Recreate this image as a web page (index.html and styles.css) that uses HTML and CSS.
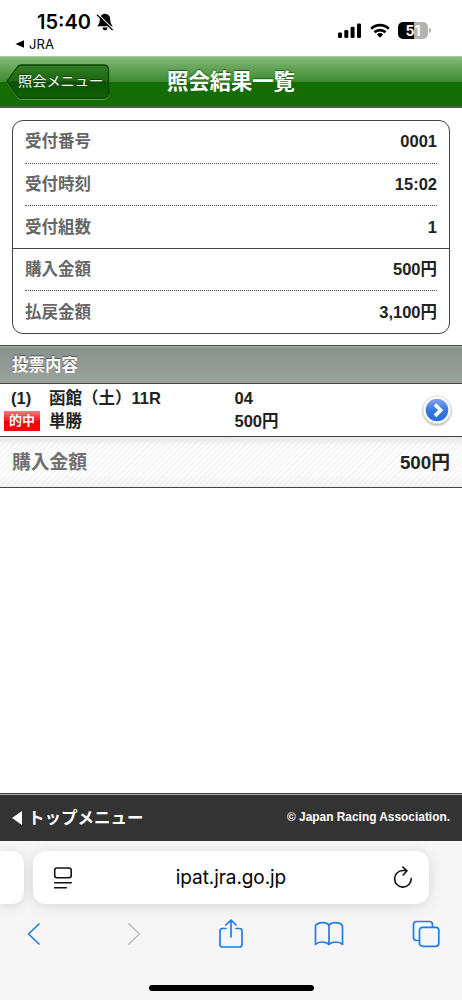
FILE: index.html
```html
<!DOCTYPE html>
<html lang="ja">
<head>
<meta charset="utf-8">
<title>照会結果一覧</title>
<link rel="stylesheet" href="styles.css">
</head>
<body>
<div class="status">
  <div class="clock-row">
    <span class="clock">15:40</span>
    <svg class="bell" width="18" height="18" viewBox="0 0 18 18"><path d="M9 .8C5 1.200 3.800 3.500 3.800 6.500C3.800 10 2.800 10.800 1.300 13.300H16.700C15.200 10.800 14.200 10 14.200 6.500C14.200 3.500 13 1.200 9 .8ZM6.300 14.500H11.700Q11 17.200 9 17.200T6.300 14.500Z"/><path d="M2.200 1.400L17.200 16.200" stroke="#fff" stroke-width="1.300"/><path d="M1 1.800L16.600 17" stroke="#111" stroke-width="1.400"/></svg>
  </div>
  <div class="return"><svg width="10" height="8" viewBox="0 0 10 8"><path d="M.5 4L9 .3V7.700Z"/></svg><span>JRA</span></div>
  <div class="indicators">
    <svg width="24" height="16" viewBox="0 0 24 16"><rect x="0" y="9.500" width="4" height="5.500" rx="1.200"/><rect x="6.300" y="7" width="4" height="8" rx="1.200"/><rect x="12.600" y="3.800" width="4" height="11.200" rx="1.200"/><rect x="19" y="0.500" width="4" height="14.500" rx="1.200"/></svg>
    <svg width="20" height="16" viewBox="0 0 20 16"><g fill="none" stroke="#000" stroke-width="2.700"><path d="M1.200 5.800A12.600 12.600 0 0 1 18.800 5.800"/><path d="M4.500 9.300A8 8 0 0 1 15.500 9.300"/></g><path d="M6.900 11.500A4.500 4.500 0 0 1 13.100 11.500L10 14.800Z"/></svg>
    <div class="battery"><span class="level">51</span><i class="nub"></i></div>
  </div>
</div>
<header class="header">
  <a class="back">
    <svg class="back-shape" width="104" height="38" viewBox="0 0 104 38"><defs><linearGradient id="bg" x1="0" y1="0" x2="0" y2="1"><stop offset="0" stop-color="#347d26"/><stop offset=".48" stop-color="#1c6710"/><stop offset=".52" stop-color="#0d5204"/><stop offset="1" stop-color="#116007"/></linearGradient></defs><path d="M15 2H97Q102.500 2 102.500 7.500V30Q102.500 35.500 97 35.500H15Q12.500 35.500 10.500 32L1 18.500L10.500 5Q12.500 2 15 2Z" fill="none" stroke="#80ad76" stroke-opacity=".7"/><path d="M15 1H97.500Q102.500 1 102.500 6V29Q102.500 34 97.500 34H15Q12.500 34 10.500 31L1 17.500L10.500 4Q12.500 1 15 1Z" fill="url(#bg)" stroke="#0b4605" stroke-width="1.300"/></svg>
    <span class="back-label">照会メニュー</span>
  </a>
  <h1 class="title">照会結果一覧</h1>
</header>
<main class="main">
  <dl class="card">
    <div class="row"><dt>受付番号</dt><dd>0001</dd></div>
    <div class="row"><dt>受付時刻</dt><dd>15:02</dd></div>
    <div class="row last"><dt>受付組数</dt><dd>1</dd></div>
    <div class="row"><dt>購入金額</dt><dd>500円</dd></div>
    <div class="row end"><dt>払戻金額</dt><dd>3,100円</dd></div>
  </dl>
  <h2 class="section">投票内容</h2>
  <div class="bet">
    <div class="bet-tag"><span class="bet-no">(1)</span><span class="hit">的中</span></div>
    <div class="bet-race"><span>函館（土）11R</span><span>単勝</span></div>
    <div class="bet-pick"><span>04</span><span>500円</span></div>
    <svg class="go" width="32" height="34" viewBox="0 0 32 34"><defs><linearGradient id="blue" x1="0" y1="0" x2="0" y2="1"><stop offset="0" stop-color="#82a9ec"/><stop offset=".5" stop-color="#3978df"/><stop offset="1" stop-color="#2b6be0"/></linearGradient></defs><circle class="go-ring" cx="16" cy="17" r="13.800"/><circle cx="16" cy="17" r="11.300" fill="url(#blue)"/><path d="M14 11.500L19.700 17.200L14 22.900" fill="none" stroke="#fff" stroke-width="3.700"/></svg>
  </div>
  <div class="total"><span class="total-label">購入金額</span><span>500円</span></div>
</main>
<footer class="footer">
  <div class="top-link"><svg width="11" height="14" viewBox="0 0 11 14"><path d="M0 7L10 0V14Z" fill="#fff"/></svg><span>トップメニュー</span></div>
  <small class="copyright">© Japan Racing Association.</small>
</footer>
<div class="browser">
  <div class="tabs">
    <div class="prev-tab"></div>
    <div class="address">
      <svg width="20" height="22" viewBox="0 0 20 22" fill="none" stroke="#111" stroke-width="1.600" stroke-linecap="round"><rect x="1.700" y="1" width="16.500" height="9.800" rx="2.200"/><path d="M1.700 15.700H18.300M1.700 20.700H13.300"/></svg>
      <span class="url">ipat.jra.go.jp</span>
      <svg width="20" height="23" viewBox="0 0 20 23" fill="none" stroke="#111" stroke-width="1.600" stroke-linecap="round" stroke-linejoin="round"><path d="M18.200 12.500A8.300 8.300 0 1 1 9.900 4.500H13.800M9.800 1L14 4.800L10.200 9"/></svg>
    </div>
    <div class="next-tab"></div>
  </div>
  <nav class="tools">
    <svg width="16" height="28" viewBox="0 0 16 28"><path d="M13 4L2.500 14L13 24"/></svg>
    <svg class="disabled" width="16" height="28" viewBox="0 0 16 28"><path d="M2 4L12.500 14L2 24"/></svg>
    <svg width="26" height="30" viewBox="0 0 26 30"><path d="M8 9.500H4.500Q2 9.500 2 12V25.500Q2 28 4.500 28H21.500Q24 28 24 25.500V12Q24 9.500 21.500 9.500H18M13 18V1.500M8 6L13 1L18 6"/></svg>
    <svg width="30" height="26" viewBox="0 0 30 26"><path d="M15 4.500Q14 2 9.500 1.600Q4 1.300 1.500 4.500V23.500Q4 20.800 8.500 21Q13 21.300 15 23.500Q17 21.300 21.500 21Q26 20.800 28.500 23.500V4.500Q26 1.300 20.500 1.600Q16 2 15 4.500V23.500"/></svg>
    <svg width="28" height="28" viewBox="0 0 28 28"><path d="M7.500 20.500H4.500Q1.500 20.500 1.500 17.500V4.500Q1.500 1.500 4.500 1.500H17.500Q20.500 1.500 20.500 4.500V7"/><rect x="7.500" y="7.300" width="19.300" height="19" rx="3"/></svg>
  </nav>
  <div class="home"></div>
</div>
</body>
</html>
```
FILE: styles.css
```css
* { box-sizing: border-box; }
body {
  margin: 0;
  width: 462px;
  height: 1000px;
  display: flex;
  flex-direction: column;
  background: #fff;
  color: #222;
  font-family: "Liberation Sans", "Noto Sans CJK JP", sans-serif;
  overflow: hidden;
}
svg { display: block; flex: none; }
h1, h2, dl, dd { margin: 0; }

.status {
  height: 56px;
  display: grid;
  grid-template: 35px 21px / 1fr auto;
  font-family: Inter, sans-serif;
  color: #000;
}
.clock-row { display: flex; align-items: center; padding: 9px 0 0 37px; gap: 5px; }
.clock { font-size: 20px; font-weight: 600; line-height: 24px; letter-spacing: 0; }
.bell { margin-top: -1px; }
.return { grid-row: 2; display: flex; align-items: center; gap: 4px; padding: 0 0 3px 15px; font-size: 13px; line-height: 16px; letter-spacing: .1px; }
.indicators { grid-column: 2; grid-row: 1 / 3; display: flex; align-items: center; padding: 5px 31px 0 0; gap: 8px; }
.battery { display: flex; align-items: center; gap: 1px; }
.level { width: 30px; height: 17px; border-radius: 5px; background: linear-gradient(90deg, #000 52%, #b3b3b3 52%); color: #fff; font-size: 14px; font-weight: 700; line-height: 17px; text-align: center; }
.nub { width: 2px; height: 5px; border-radius: 0 2px 2px 0; background: #b3b3b3; }

.header {
  height: 52px;
  display: grid;
  grid-template-columns: 103px 1fr 109px;
  padding-left: 6px;
  border-bottom: 2px solid #4a604b;
  background: linear-gradient(#add0a4 0, #82b777 2px, #3c892e 26px, #146d04 26px, #166b06 100%);
  align-items: center;
}
.back { display: grid; height: 38px; margin-top: 4px; }
.back-shape, .back-label { grid-area: 1 / 1; }
.back-label { z-index: 1; padding-left: 12px; font-size: 14.2px; line-height: 35px; color: #fff; white-space: nowrap; text-shadow: 0 -1px 1px #123d0c; }
.title { padding-right: 0; padding-top: 1px; text-align: center; color: #fff; font-size: 21.3px; line-height: 40px; text-shadow: 0 -1px 1px #245919; white-space: nowrap; }

.main { height: 685px; padding-top: 12px; }
.card { height: 214px; margin: 0 12px; border: 1px solid #444; border-radius: 11px; }
.row { height: 42.5px; margin: 0 12px; border-bottom: 1px dotted #555; display: flex; justify-content: space-between; align-items: center; font-size: 16.5px; line-height: 24px; font-weight: bold; }
.row:first-child { padding-bottom: 1px; }
.row dt { color: #666; }
.row.last { margin: 0; padding: 0 12px; border-bottom: 1px solid #444; }
.row.end { border: 0; }

.section { height: 39px; margin-top: 11px; padding-left: 12px; border: 1px solid #444; border-width: 1px 0; background: linear-gradient(#b0b7b2 0, #8a928d 2px, #9aa39d 100%); color: #fff; font-size: 16.5px; line-height: 39px; text-shadow: 0 -1px 1px #555; }
.bet { height: 53px; display: grid; grid-template-columns: 45px 185.500px 1fr 41px; padding-left: 4px; border-bottom: 1px solid #444; font-size: 16.5px; line-height: 22.5px; font-weight: bold; align-items: center; }
.bet-tag, .bet-race, .bet-pick { display: flex; flex-direction: column; height: 45px; margin-top: -1px; }
.bet-race, .bet-pick { white-space: nowrap; }
.bet-no { padding-left: 7px; }
.hit { width: 36px; height: 20px; margin-top: 1px; flex: none; text-align: center; background: linear-gradient(#ff7b7b, #f91818 48%, #f00000 52%, #ff0505); color: #fff; font-size: 13px; line-height: 19px; }
.go-ring { fill: #fff; stroke: #e4e4e4; stroke-width: 1; filter: drop-shadow(0 1px 1px #999); }
.total { height: 51px; display: flex; align-items: center; justify-content: space-between; padding: 0 12px 3px; border-bottom: 1px solid #444; background: linear-gradient(#e5e5e5 0, #fff0 9px, #fff0 75%, #e9e9e980), repeating-linear-gradient(135deg, #fdfdfd 0 2px, #f7f7f7 2px 4px); font-size: 18.8px; font-weight: bold; }
.total-label { color: #707070; }

.footer { height: 48px; display: flex; align-items: center; justify-content: space-between; padding: 1px 12px 0; background: linear-gradient(#444 0 1px, #aaa 1px 2px, #333 2px); color: #fff; }
.top-link { display: flex; align-items: center; gap: 5px; font-size: 16.5px; font-weight: bold; line-height: 24px; }
.copyright { font-size: 11.9px; font-weight: bold; padding-bottom: 2px; }

.browser { height: 159px; background: #f6f6f6; overflow: hidden; }
.tabs { height: 63px; padding-top: 10px; display: grid; grid-template-columns: 24px 396px 1fr; column-gap: 9px; }
.prev-tab { height: 53px; background: #fff; border-radius: 0 12px 12px 0; box-shadow: 0 2px 12px #0002; }
.address { height: 53px; display: flex; align-items: center; justify-content: space-between; padding: 0 16px 0 20px; background: #fff; border-radius: 13px; box-shadow: 0 2px 14px #0002; }
.url { padding-right: 4px; font: 19px/24px Inter, sans-serif; color: #000; letter-spacing: -.08px; }
.tools { height: 60px; display: grid; grid-template-columns: 68px 133px 60px 135px 60px; justify-items: center; align-items: center; fill: none; stroke: #237be7; stroke-width: 1.7; stroke-linejoin: round; stroke-linecap: round; }
.disabled { stroke: #bfbfbf; }
.home { width: 165px; height: 6px; margin: 20.500px auto 0; border-radius: 3px; background: #000; }
```
